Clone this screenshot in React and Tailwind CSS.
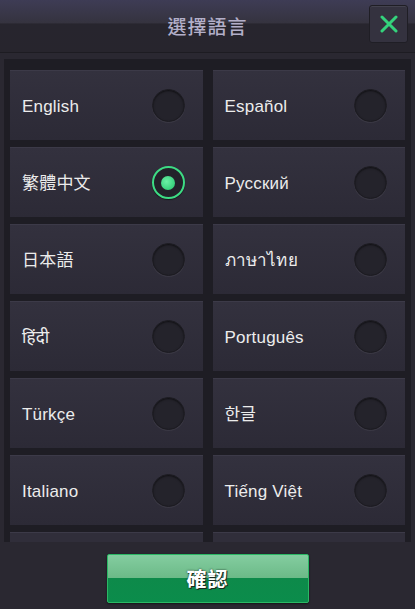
import React from "react";

const langs = [
  ["English", "Español"],
  ["繁體中文", "Русский"],
  ["日本語", "ภาษาไทย"],
  ["हिंदी", "Português"],
  ["Türkçe", "한글"],
  ["Italiano", "Tiếng Việt"],
];

function Radio({ on }) {
  if (on) {
    return (
      <div className="w-[33px] h-[33px] rounded-full border-2 border-[#3ddc84] bg-[#23222a] flex items-center justify-center shadow-[0_1px_1px_rgba(0,0,0,0.5)]">
        <div className="w-[14px] h-[14px] rounded-full bg-[radial-gradient(circle_at_40%_40%,#6cf0a5,#22c46a)]" />
      </div>
    );
  }
  return (
    <div className="w-[33px] h-[33px] rounded-full bg-[#24232b] border border-[#1c1b21] shadow-[inset_0_1px_2px_rgba(0,0,0,0.6),0_1px_0_rgba(255,255,255,0.06)]" />
  );
}

function Cell({ label, on }) {
  return (
    <div className="h-[70px] bg-[linear-gradient(180deg,#33313e,#2c2a36)] border-t border-[#3c3a48] flex items-center justify-between pl-[12px] pr-[18px]">
      <span className="text-[17px] mt-[2px] text-[#ececec] font-['Liberation_Sans','Noto_Sans','Noto_Sans_CJK_TC',sans-serif] tracking-[0.2px]">
        {label}
      </span>
      <Radio on={on} />
    </div>
  );
}

export default function App() {
  return (
    <div className="w-[415px] h-[609px] bg-[#2a2831] flex flex-col overflow-hidden font-['Liberation_Sans','Noto_Sans_CJK_TC',sans-serif]">
      <div className="h-[53px] shrink-0 relative bg-[linear-gradient(180deg,#3e3c55_0%,#35333f_44%,#27252e_46%,#27252d_100%)] border-b border-[#1d1c22] flex items-center justify-center">
        <span className="text-[19px] text-[#b3afc9] tracking-[1px] font-['Noto_Sans_CJK_TC',sans-serif] font-medium mt-[1px]">
          選擇語言
        </span>
        <div className="absolute right-[7px] top-[5px] w-[39px] h-[38px] rounded-[3px] bg-[#34323f] border border-[#1f1e25] shadow-[inset_0_1px_0_rgba(255,255,255,0.08)] flex items-center justify-center">
          <svg width="18" height="18" viewBox="0 0 18 18">
            <path d="M2 2 L16 16 M16 2 L2 16" stroke="#34d27c" strokeWidth="3" strokeLinecap="round" />
          </svg>
        </div>
      </div>
      <div className="mx-[4px] mt-[6px] h-[483px] bg-[#1e1d24] overflow-hidden px-[6px] pt-[11px]">
        <div className="grid grid-cols-2 gap-x-[10px] gap-y-[7px]">
          {langs.map(([a, b], i) => (
            <React.Fragment key={i}>
              <Cell label={a} on={a === "繁體中文"} />
              <Cell label={b} />
            </React.Fragment>
          ))}
          <div className="h-[70px] bg-[#302e3a] border-t border-[#3c3a48]" />
          <div className="h-[70px] bg-[#302e3a] border-t border-[#3c3a48]" />
        </div>
      </div>
      <div className="flex justify-center mt-[12px]">
        <div className="w-[202px] h-[49px] rounded-[2px] border border-[#2bb865] bg-[linear-gradient(180deg,#84cda0_0%,#6cba88_48%,#0d8a4a_50%,#0b8c4b_100%)] flex items-center justify-center shadow-[0_1px_2px_rgba(0,0,0,0.5)]">
          <span className="text-[20px] font-bold text-white font-['Noto_Sans_CJK_TC',sans-serif] [text-shadow:1px_1px_0_#1a2a20,0_0_2px_#1a2a20] tracking-[1px]">
            確認
          </span>
        </div>
      </div>
    </div>
  );
}
